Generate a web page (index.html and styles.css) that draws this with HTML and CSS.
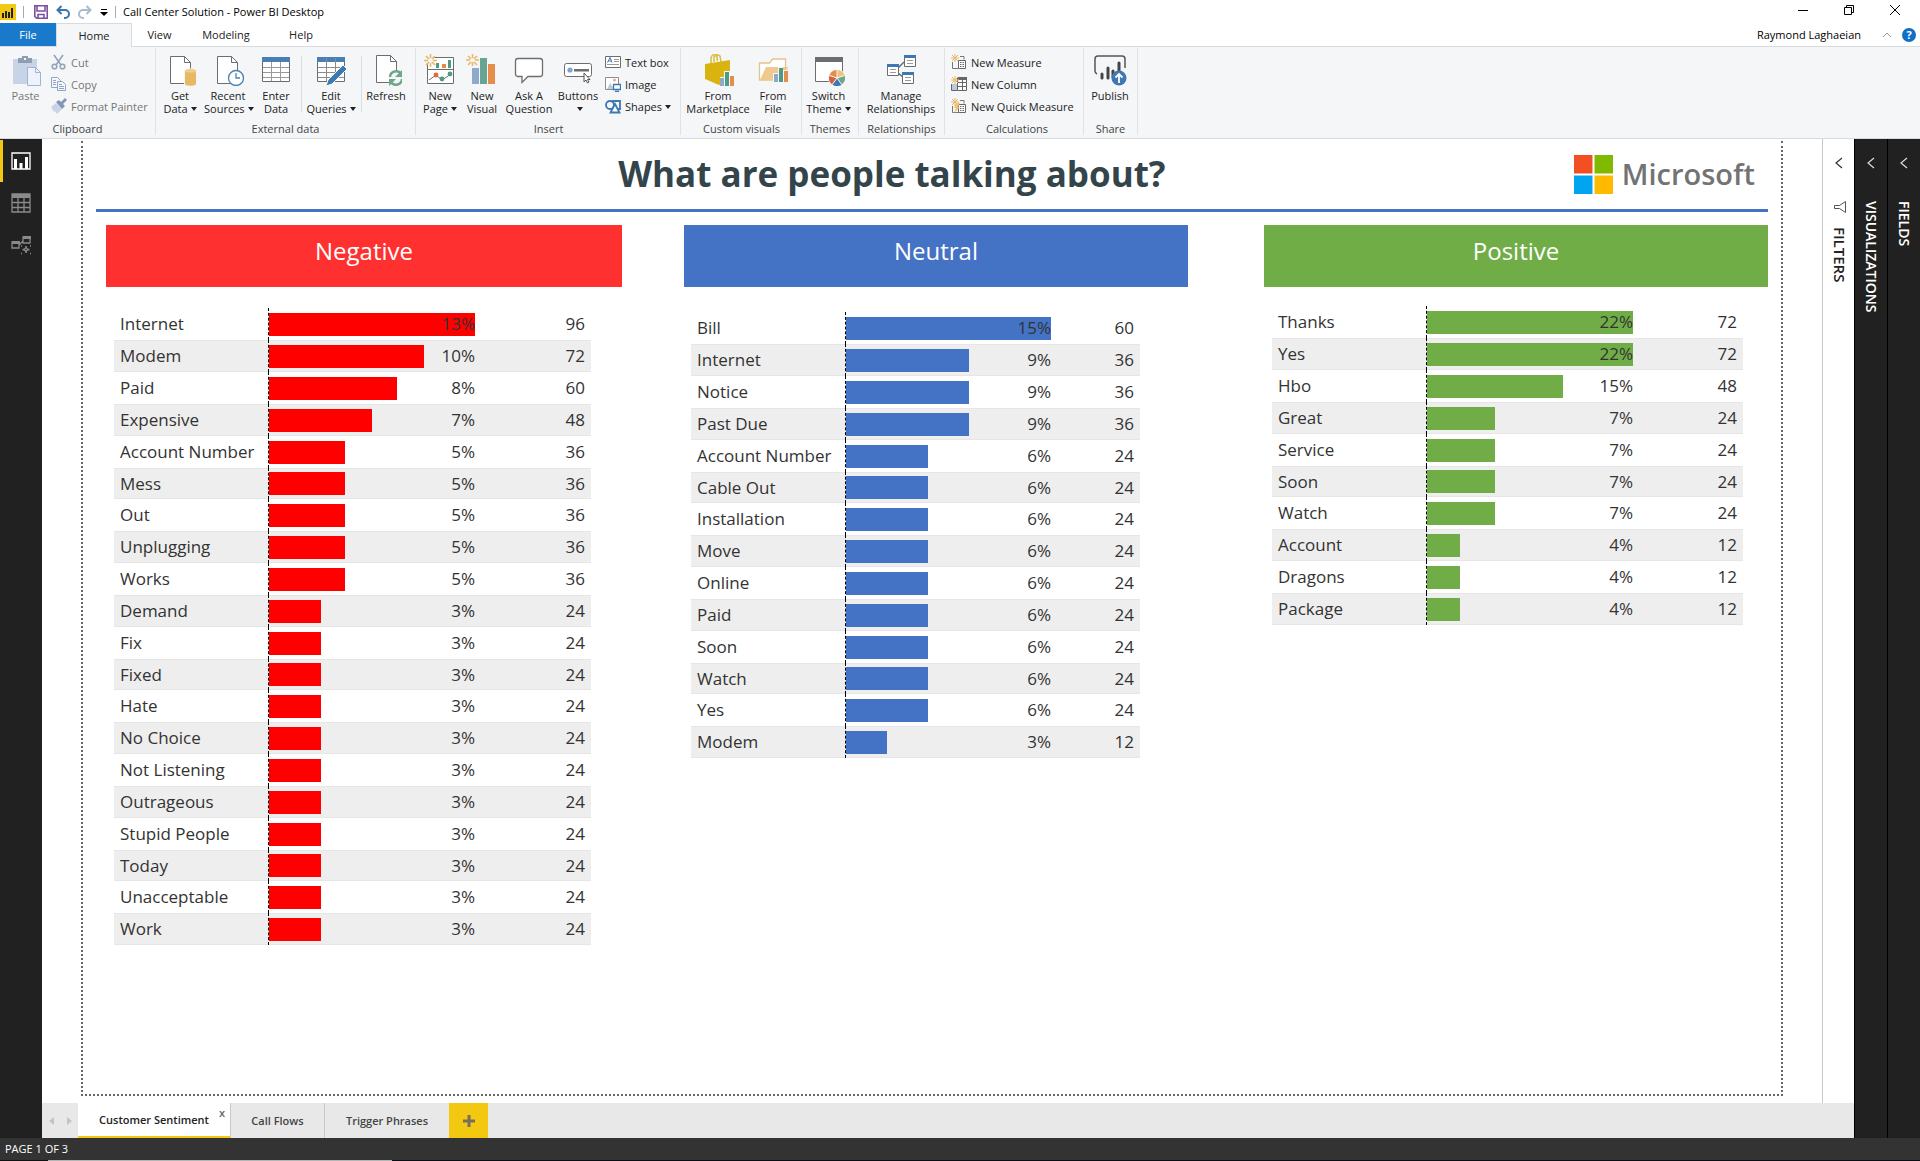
FILE: index.html
```
<!DOCTYPE html>
<html lang="en">
<head>
<meta charset="utf-8">
<title>Call Center Solution - Power BI Desktop</title>
<link rel="stylesheet" href="styles.css">
</head>
<body>
<header class="titlebar">
  <svg class="app-logo" width="16" height="16" viewBox="0 0 16 16"><path fill="#f2c811" d="M0 0h16v16H0z"/><path fill="#222" d="M2 9h2v5H2zM5 7h2v7H5zM8 8h2v6H8zM11 4h2v10h-2z"/></svg>
  <span class="bar-sep"></span>
  <button class="quick" aria-label="Save"><svg width="14" height="14" viewBox="0 0 14 14" fill="none" stroke="#7c4fa3" stroke-width="1.6"><path d="M.8.8h12.4v12.4H2.6L.8 11.4z"/><path d="M3 1v5h8V1M4 13V9.500h6V13"/></svg></button>
  <button class="quick" aria-label="Undo"><svg width="14" height="14" viewBox="0 0 14 14" fill="none" stroke="#3a76ad" stroke-width="2"><path d="M5.500 1 1.500 5l4 4M2 5h7a4 4 0 0 1 0 8H8"/></svg></button>
  <button class="quick" aria-label="Redo"><svg width="14" height="14" viewBox="0 0 14 14" fill="none" stroke="#a9bccf" stroke-width="2"><path d="M8.500 1l4 4-4 4M12 5H5a4 4 0 0 0 0 8h1"/></svg></button>
  <button class="quick quick-more" aria-label="Customize toolbar"><svg width="8" height="8" viewBox="0 0 8 8"><path d="M1 0h6v1H1zM0 3h8L4 7z"/></svg></button>
  <span class="bar-sep"></span>
  <span class="app-title">Call Center Solution - Power BI Desktop</span>
  <div class="window-controls">
    <button aria-label="Minimize"><svg width="12" height="12" viewBox="0 0 12 12"><path d="M1 6h10v1H1z"/></svg></button>
    <button aria-label="Restore"><svg width="12" height="12" viewBox="0 0 12 12" fill="none" stroke="#000"><path d="M1.500 3.500h7v7h-7zM3.500 3V1.500h7v7H9"/></svg></button>
    <button aria-label="Close"><svg width="12" height="12" viewBox="0 0 12 12" stroke="#000"><path d="M1 1l10 10M11 1 1 11"/></svg></button>
  </div>
</header>

<nav class="menu">
  <button class="menu-tab file">File</button>
  <button class="menu-tab home">Home</button>
  <button class="menu-tab view">View</button>
  <button class="menu-tab modeling">Modeling</button>
  <button class="menu-tab help">Help</button>
  <div class="account">
    <span>Raymond Laghaeian</span>
    <button aria-label="Collapse ribbon"><svg width="10" height="6" viewBox="0 0 10 6" fill="none" stroke="#999"><path d="M1 5l4-4 4 4"/></svg></button>
    <button class="help-badge" aria-label="Help">?</button>
  </div>
</nav>

<section class="ribbon">
  <div class="group g-clipboard">
    <div class="tools">
      <button class="big off w-paste"><svg width="32" height="32" viewBox="0 0 32 32"><path fill="#c9d3e6" d="M3 5h24v25H3z"/><path fill="#8e9db3" d="M8 4h4V2h6v2h4v5H8z"/><path fill="#f4f6f8" d="M14 4h2v2h-2z"/><path fill="#eef3fb" stroke="#9db4d6" d="M17.500 13.500h8l5 5v13h-13z"/><path fill="none" stroke="#9db4d6" d="M25.500 13.500v5h5"/></svg>Paste</button>
      <div class="stack">
        <button class="small off"><svg width="16" height="16" viewBox="0 0 16 16" fill="none" stroke="#94a3b8" stroke-width="1.600"><path d="M3 1l7 10M12 1 5 11"/><circle cx="3.500" cy="12.500" r="2.300"/><circle cx="11.500" cy="12.500" r="2.300"/></svg>Cut</button>
        <button class="small off"><svg width="16" height="16" viewBox="0 0 16 16" fill="#f4f6f8" stroke="#8ea7c8"><path d="M.5 1.500h6l3 3v7h-9z"/><path d="M2 4.500h3M2 6.500h3M2 8.500h3"/><path d="M6.500 5.500h5l3 3v6h-8z"/><path d="M8 8.500h3M8 10.500h5M8 12.500h5"/></svg>Copy</button>
        <button class="small off"><svg width="16" height="16" viewBox="0 0 16 16"><path fill="#c9d3e6" d="M0 9l5-4 6 6-5 5-2-3-1 1z"/><path fill="#8296b4" d="M5 4l3-2 2 2 4-4 2 2-4 4 2 2-3 3z"/></svg>Format Painter</button>
      </div>
    </div>
    <div class="group-name">Clipboard</div>
  </div>
  <div class="group g-external">
    <div class="tools">
      <button class="big w48"><svg width="32" height="32" viewBox="0 0 32 32"><path fill="#fff" stroke="#6d6d6d" d="M6.500 2.500h14l6 6v21h-20z"/><path fill="none" stroke="#6d6d6d" d="M20.500 2.500v6h6"/><path fill="#e8b964" stroke="#f4f6f8" d="M20.500 17c0-3 12-3 12 0v13c0 3-12 3-12 0z"/><ellipse cx="26.500" cy="17" rx="5.500" ry="1.600" fill="#f2cd87"/></svg>Get<br><span class="drop">Data</span></button>
      <button class="big w48"><svg width="32" height="32" viewBox="0 0 32 32"><path fill="#fff" stroke="#6d6d6d" d="M5.500 2.500h14l6 6v21h-20z"/><path fill="none" stroke="#6d6d6d" d="M19.500 2.500v6h6"/><circle cx="24" cy="24" r="7.500" fill="#fff" stroke="#4a7fb5" stroke-width="1.300"/><path fill="none" stroke="#4a7fb5" stroke-width="1.300" d="M24 19v5h4"/></svg>Recent<br><span class="drop">Sources</span></button>
      <button class="big w48"><svg width="32" height="32" viewBox="0 0 32 32"><path fill="#fff" stroke="#6d6d6d" d="M2.500 3.500h27v24h-27z"/><path fill="#4a7fb5" d="M2 3h28v5H2z"/><path stroke="#9a9a9a" d="M3 13.500h26M3 18.500h26M3 23.500h26M11.500 8v19M20.500 8v19"/></svg>Enter<br>Data</button>
      <span class="tool-sep"></span>
      <button class="big w-edit"><svg width="32" height="32" viewBox="0 0 32 32"><path fill="#fff" stroke="#6d6d6d" d="M2.500 3.500h27v24h-27z"/><path fill="#4a7fb5" d="M2 3h28v5H2z"/><path stroke="#8a8a8a" d="M3 13.500h26M3 18.500h26M3 23.500h26M11.500 4v23M20.500 4v23"/><path fill="#3e78b2" stroke="#f4f6f8" d="M28 11l4 4-15 15-6 2 2-6z"/></svg>Edit<br><span class="drop">Queries</span></button>
      <span class="tool-sep"></span>
      <button class="big w48"><svg width="32" height="32" viewBox="0 0 32 32"><path fill="#fff" stroke="#6d6d6d" d="M6.500 1.500h14l6 6v21h-20z"/><path fill="none" stroke="#6d6d6d" d="M20.500 1.500v6h6"/><circle cx="26" cy="24" r="7" fill="#f4f6f8"/><g fill="none" stroke="#6fa58a" stroke-width="2.400"><path d="M20 23a6 6 0 0 1 11-3M32 25a6 6 0 0 1-11 3"/></g><path fill="#6fa58a" d="M32 16v7h-7zM19 32v-7h7z"/></svg>Refresh</button>
    </div>
    <div class="group-name">External data</div>
  </div>
  <div class="group g-insert">
    <div class="tools">
      <button class="big w46"><svg width="32" height="32" viewBox="0 0 32 32"><path fill="#fff" stroke="#6d6d6d" d="M3.500 3.500h26v26h-26zM3.500 15.500h26"/><path fill="#4e9a85" d="M12 9h3v5h-3zM24 6h3v8h-3z"/><path fill="#e38a43" d="M18 10h4v4h-4z"/><path fill="none" stroke="#6d6d6d" d="M5 26l7-5 6 5 9-6"/><circle cx="12" cy="21" r="2.400" fill="#e0693a"/><circle cx="18" cy="25" r="2.400" fill="#4e9a85"/><circle cx="26" cy="20" r="2.400" fill="#4e9a85"/><circle cx="6.500" cy="6.500" r="5" fill="#f4f6f8"/><path stroke="#eab765" stroke-width="1.600" d="M6.500 0v4M6.500 9v4M0 6.500h4M9 6.500h4M2 2l3 3M8 8l3 3M11 2 8 5M5 8l-3 3"/></svg>New<br><span class="drop">Page</span></button>
      <button class="big w38"><svg width="32" height="32" viewBox="0 0 32 32"><path fill="#8eaacb" d="M6 14h7v16H6z"/><path fill="#67a592" d="M14 4h7v26h-7z"/><path fill="#e58d4b" d="M22 10h7v20h-7z"/><path stroke="#eab765" stroke-width="1.600" d="M6.500 0v4M6.500 8v4M0 6h4M9 6h4M2 2l3 3M8 8l3 3M11 2 8 5M5 8l-3 3"/></svg>New<br>Visual</button>
      <button class="big w56"><svg width="32" height="32" viewBox="0 0 32 32"><path fill="#fff" stroke="#6d6d6d" stroke-width="1.300" d="M5 4.500h22q2.500 0 2.500 2.500v13q0 2.500-2.500 2.500H15l-6 6v-6H5q-2.500 0-2.500-2.500V7q0-2.500 2.500-2.500z"/></svg>Ask A<br>Question</button>
      <button class="big w-buttons"><svg width="32" height="32" viewBox="0 0 32 32"><rect x="2.500" y="9.500" width="27" height="13" rx="2" fill="#fff" stroke="#6d6d6d"/><circle cx="8" cy="16" r="2.600" fill="#7ba5cf"/><path fill="#6d6d6d" d="M12 15h15v2.500H12z"/><path fill="#fff" stroke="#555" d="M22 19v9l2-2 1.500 3 1.500-1-1.500-2.500h2.500z"/></svg>Buttons<br><span class="drop"></span></button>
      <div class="stack stack-insert">
        <button class="small"><svg width="16" height="16" viewBox="0 0 16 16"><path fill="#fff" stroke="#6d6d6d" d="M.5 2.500h15v11H.5z"/><path fill="none" stroke="#3e78b2" d="M2.500 8.500 5 3.500l2 5M3.500 7h3"/><path stroke="#999" d="M9 5.500h5M9 7.500h5M2 10.500h12"/></svg>Text box</button>
        <button class="small"><svg width="16" height="16" viewBox="0 0 16 16"><path fill="#fff" stroke="#8d8d8d" d="M.5 1.500h13v12H.5z"/><circle cx="9.500" cy="4" r="1.500" fill="#f0a977"/><path fill="#bccbdc" d="M2 13l3-6 4 6z"/><path fill="#fff" stroke="#3e78b2" stroke-width="1.300" d="M8.500 8.500h7v5h-7zM10 15.500h4"/></svg>Image</button>
        <button class="small"><svg width="16" height="16" viewBox="0 0 16 16" fill="none" stroke="#3e78b2" stroke-width="1.800"><circle cx="5" cy="7" r="4"/><path d="M7 3h8v8h-4"/><path fill="#fff" d="M10 6l4.500 8.500h-9z"/></svg><span class="drop">Shapes</span></button>
      </div>
    </div>
    <div class="group-name">Insert</div>
  </div>
  <div class="group g-custom">
    <div class="tools">
      <button class="big w-market"><svg width="32" height="32" viewBox="0 0 32 32"><path fill="none" stroke="#d9bd3c" stroke-width="1.500" d="M9 10V4q1-4 4-3t2 6M12 8V3q2-4 6-1l1 6"/><path fill="#d9b40f" d="M3 10l25-4v20l-11 5-14-6z"/><path fill="#f4f6f8" d="M18 32V23h4v-6h6v4h4v11z"/><path fill="#8eaacb" d="M18 24h4v8h-4z"/><path fill="#4e9a85" d="M23 18h4v14h-4z"/><path fill="#e58d4b" d="M28 22h4v10h-4z"/></svg>From<br>Marketplace</button>
      <button class="big w38"><svg width="32" height="32" viewBox="0 0 32 32"><path fill="#fff" stroke="#e5c48c" stroke-width="1.300" d="M2.500 26V9h10l3-4h13v21z"/><path fill="#efc98d" d="M3 26l6-13h22l-4 13z"/><path fill="#f4f6f8" d="M16 28V19h5v-6h5v3h6v12z"/><path fill="#8eaacb" d="M17 20h4v8h-4z"/><path fill="#4e9a85" d="M22 14h4v14h-4z"/><path fill="#e58d4b" d="M27 17h4v11h-4z"/></svg>From<br>File</button>
    </div>
    <div class="group-name">Custom visuals</div>
  </div>
  <div class="group g-themes">
    <div class="tools">
      <button class="big w-theme"><svg width="32" height="32" viewBox="0 0 32 32"><path fill="#fff" stroke="#6d6d6d" d="M2.500 3.500h27v24h-27z"/><path fill="#6d6d6d" d="M2 3h28v5H2z"/><circle cx="24" cy="24" r="9" fill="#f4f6f8"/><path fill="#e58d4b" d="M24 24V16a8 8 0 0 0-7.600 5.500z"/><path fill="#efc27c" d="M24 24V16a8 8 0 0 1 7.600 5.500z"/><path fill="#6fa58a" d="M24 24l7.600-2.500a8 8 0 0 1-2.900 9z"/><path fill="#3e78b2" d="M24 24l4.700 6.500a8 8 0 0 1-9.400 0z"/><path fill="#d9603c" d="M24 24l-4.700 6.500a8 8 0 0 1-2.900-9z"/><path stroke="#f4f6f8" d="M24 24V16M24 24l7.600-2.500M24 24l4.700 6.500M24 24l-4.700 6.500M24 24l-7.600-2.500"/></svg>Switch<br><span class="drop">Theme</span></button>
    </div>
    <div class="group-name">Themes</div>
  </div>
  <div class="group g-relations">
    <div class="tools">
      <button class="big w-rel"><svg width="32" height="32" viewBox="0 0 32 32"><path fill="none" stroke="#6d6d6d" stroke-width="1.500" d="M12 15l7-7M12 18l7 6"/><g fill="#fff" stroke="#6d6d6d"><path d="M2.500 11.500h11v10h-11zM19.500 1.500h11v11h-11zM17.500 18.500h11v11h-11z"/><path stroke="#9a9a9a" d="M5 15.500h6M5 18.500h6M22 6.500h6M22 9.500h6M20 23.500h6M20 26.500h6"/></g><path fill="#3e78b2" d="M2 10h12v3H2zM19 1h12v3H19zM17 18h12v3H17z"/></svg>Manage<br>Relationships</button>
    </div>
    <div class="group-name">Relationships</div>
  </div>
  <div class="group g-calc">
    <div class="tools">
      <div class="stack">
        <button class="small"><svg width="16" height="16" viewBox="0 0 16 16"><path fill="none" stroke="#777" d="M1.500 8v6.500H7M9 2.500h4v3"/><path stroke="#eab765" d="M4 0v8M0 4h8M1 1l6 6M7 1 1 7"/><path fill="#fff" stroke="#666" d="M7.500 6.500h7v8h-7z"/><path stroke="#666" d="M9 8.500h4M9 10.500h4M9 12.500h4" stroke-dasharray="1 .5"/></svg>New Measure</button>
        <button class="small"><svg width="16" height="16" viewBox="0 0 16 16"><path fill="#fff" stroke="#666" d="M6.500 1.500h9v13h-9zM.5 8v6.500h6M7 6.500h8M7 10.500h8M11.500 2v12"/><path fill="#666" d="M7 1h9v3H7z"/><path fill="#bccbdc" d="M1 8h5v6H1z"/><path stroke="#eab765" d="M4 0v8M0 4h8M1 1l6 6M7 1 1 7"/></svg>New Column</button>
        <button class="small"><svg width="16" height="16" viewBox="0 0 16 16"><path fill="none" stroke="#777" d="M1.500 8v6.500H7M9 2.500h4v3"/><path fill="#fff" stroke="#666" d="M7.500 6.500h7v8h-7z"/><path stroke="#666" d="M9 8.500h4M9 10.500h4M9 12.500h4" stroke-dasharray="1 .5"/><path stroke="#eab765" d="M4 0v8M0 4h8M1 1l6 6M7 1 1 7"/><path fill="#efc27c" d="M5 5h4l-2 4h2l-6 6 2-5H3z"/></svg>New Quick Measure</button>
      </div>
    </div>
    <div class="group-name">Calculations</div>
  </div>
  <div class="group g-share">
    <div class="tools">
      <button class="big w-publish"><svg width="34" height="32" viewBox="0 0 34 32"><path fill="none" stroke="#555" stroke-width="1.500" d="M4 20q-2-1-2-3V5q0-3 3-3h24q3 0 3 3v9"/><path stroke="#444" stroke-width="3" stroke-linecap="round" d="M9 20v4M15 14v10M20 17v6M26 9v8"/><circle cx="26" cy="24" r="7.500" fill="#3e78b2"/><path fill="none" stroke="#fff" stroke-width="1.800" d="M26 29v-9M22.500 23.500 26 20l3.500 3.500"/></svg>Publish</button>
    </div>
    <div class="group-name">Share</div>
  </div>
</section>

<div class="workspace">
  <nav class="views">
    <button class="view-btn active" aria-label="Report"><svg width="20" height="18" viewBox="0 0 20 18" fill="none" stroke="#fff"><path d="M1 1h18v16H1z" stroke-width="1.300"/><path fill="#fff" stroke="none" d="M3 7h3v10H3zM8.500 11h3v6h-3zM14 5h3v12h-3z"/></svg></button>
    <button class="view-btn" aria-label="Data"><svg width="20" height="20" viewBox="0 0 20 20" fill="none" stroke="#8a8a8a" stroke-width="1.300"><path d="M1 1h18v18H1zM1 9.500h18M1 14.500h18M7 5v14M13 5v14"/><path fill="#8a8a8a" stroke="none" d="M1 1h18v4H1z"/></svg></button>
    <button class="view-btn" aria-label="Model"><svg width="20" height="20" viewBox="0 0 20 20" fill="none" stroke="#8a8a8a" stroke-width="1.300"><path d="M1 7h7v6H1zM12 2h7v6h-7zM8 10l4-4"/><path fill="#8a8a8a" stroke="none" d="M1 6h8v3H1zM12 1h8v3h-8z"/><path d="M15 11q0 3.500 3.500 3.500Q15 14.500 15 18q0-3.500-3.500-3.500Q15 14.500 15 11z"/><path stroke-width="1.500" d="M10 11h1M19 11h1M10 18.500h1M19 18.500h1"/></svg></button>
  </nav>

  <main class="center">
    <div class="stage">
      <article class="page">
        <div class="page-head">
          <h1>What are people talking about?</h1>
          <div class="brand">
            <svg width="39" height="39" viewBox="0 0 39 39"><path fill="#f25022" d="M0 0h18.500v18.500H0z"/><path fill="#7fba00" d="M20.500 0H39v18.500H20.500z"/><path fill="#00a4ef" d="M0 20.500h18.500V39H0z"/><path fill="#ffb900" d="M20.500 20.500H39V39H20.500z"/></svg>
            <span>Microsoft</span>
          </div>
        </div>
        <div class="columns">
          <section class="sentiment negative">
            <h2>Negative</h2>
            <table aria-label="Negative phrases">
              <tr><th scope="row">Internet</th><td class="share"><div class="track"><i class="bar" style="width:100%"></i><span>13%</span></div></td><td class="count">96</td></tr>
              <tr><th scope="row">Modem</th><td class="share"><div class="track"><i class="bar" style="width:75%"></i><span>10%</span></div></td><td class="count">72</td></tr>
              <tr><th scope="row">Paid</th><td class="share"><div class="track"><i class="bar" style="width:62%"></i><span>8%</span></div></td><td class="count">60</td></tr>
              <tr><th scope="row">Expensive</th><td class="share"><div class="track"><i class="bar" style="width:50%"></i><span>7%</span></div></td><td class="count">48</td></tr>
              <tr><th scope="row">Account Number</th><td class="share"><div class="track"><i class="bar" style="width:37%"></i><span>5%</span></div></td><td class="count">36</td></tr>
              <tr><th scope="row">Mess</th><td class="share"><div class="track"><i class="bar" style="width:37%"></i><span>5%</span></div></td><td class="count">36</td></tr>
              <tr><th scope="row">Out</th><td class="share"><div class="track"><i class="bar" style="width:37%"></i><span>5%</span></div></td><td class="count">36</td></tr>
              <tr><th scope="row">Unplugging</th><td class="share"><div class="track"><i class="bar" style="width:37%"></i><span>5%</span></div></td><td class="count">36</td></tr>
              <tr><th scope="row">Works</th><td class="share"><div class="track"><i class="bar" style="width:37%"></i><span>5%</span></div></td><td class="count">36</td></tr>
              <tr><th scope="row">Demand</th><td class="share"><div class="track"><i class="bar" style="width:25%"></i><span>3%</span></div></td><td class="count">24</td></tr>
              <tr><th scope="row">Fix</th><td class="share"><div class="track"><i class="bar" style="width:25%"></i><span>3%</span></div></td><td class="count">24</td></tr>
              <tr><th scope="row">Fixed</th><td class="share"><div class="track"><i class="bar" style="width:25%"></i><span>3%</span></div></td><td class="count">24</td></tr>
              <tr><th scope="row">Hate</th><td class="share"><div class="track"><i class="bar" style="width:25%"></i><span>3%</span></div></td><td class="count">24</td></tr>
              <tr><th scope="row">No Choice</th><td class="share"><div class="track"><i class="bar" style="width:25%"></i><span>3%</span></div></td><td class="count">24</td></tr>
              <tr><th scope="row">Not Listening</th><td class="share"><div class="track"><i class="bar" style="width:25%"></i><span>3%</span></div></td><td class="count">24</td></tr>
              <tr><th scope="row">Outrageous</th><td class="share"><div class="track"><i class="bar" style="width:25%"></i><span>3%</span></div></td><td class="count">24</td></tr>
              <tr><th scope="row">Stupid People</th><td class="share"><div class="track"><i class="bar" style="width:25%"></i><span>3%</span></div></td><td class="count">24</td></tr>
              <tr><th scope="row">Today</th><td class="share"><div class="track"><i class="bar" style="width:25%"></i><span>3%</span></div></td><td class="count">24</td></tr>
              <tr><th scope="row">Unacceptable</th><td class="share"><div class="track"><i class="bar" style="width:25%"></i><span>3%</span></div></td><td class="count">24</td></tr>
              <tr><th scope="row">Work</th><td class="share"><div class="track"><i class="bar" style="width:25%"></i><span>3%</span></div></td><td class="count">24</td></tr>
            </table>
          </section>
          <section class="sentiment neutral">
            <h2>Neutral</h2>
            <table aria-label="Neutral phrases">
              <tr><th scope="row">Bill</th><td class="share"><div class="track"><i class="bar" style="width:100%"></i><span>15%</span></div></td><td class="count">60</td></tr>
              <tr><th scope="row">Internet</th><td class="share"><div class="track"><i class="bar" style="width:60%"></i><span>9%</span></div></td><td class="count">36</td></tr>
              <tr><th scope="row">Notice</th><td class="share"><div class="track"><i class="bar" style="width:60%"></i><span>9%</span></div></td><td class="count">36</td></tr>
              <tr><th scope="row">Past Due</th><td class="share"><div class="track"><i class="bar" style="width:60%"></i><span>9%</span></div></td><td class="count">36</td></tr>
              <tr><th scope="row">Account Number</th><td class="share"><div class="track"><i class="bar" style="width:40%"></i><span>6%</span></div></td><td class="count">24</td></tr>
              <tr><th scope="row">Cable Out</th><td class="share"><div class="track"><i class="bar" style="width:40%"></i><span>6%</span></div></td><td class="count">24</td></tr>
              <tr><th scope="row">Installation</th><td class="share"><div class="track"><i class="bar" style="width:40%"></i><span>6%</span></div></td><td class="count">24</td></tr>
              <tr><th scope="row">Move</th><td class="share"><div class="track"><i class="bar" style="width:40%"></i><span>6%</span></div></td><td class="count">24</td></tr>
              <tr><th scope="row">Online</th><td class="share"><div class="track"><i class="bar" style="width:40%"></i><span>6%</span></div></td><td class="count">24</td></tr>
              <tr><th scope="row">Paid</th><td class="share"><div class="track"><i class="bar" style="width:40%"></i><span>6%</span></div></td><td class="count">24</td></tr>
              <tr><th scope="row">Soon</th><td class="share"><div class="track"><i class="bar" style="width:40%"></i><span>6%</span></div></td><td class="count">24</td></tr>
              <tr><th scope="row">Watch</th><td class="share"><div class="track"><i class="bar" style="width:40%"></i><span>6%</span></div></td><td class="count">24</td></tr>
              <tr><th scope="row">Yes</th><td class="share"><div class="track"><i class="bar" style="width:40%"></i><span>6%</span></div></td><td class="count">24</td></tr>
              <tr><th scope="row">Modem</th><td class="share"><div class="track"><i class="bar" style="width:20%"></i><span>3%</span></div></td><td class="count">12</td></tr>
            </table>
          </section>
          <section class="sentiment positive">
            <h2>Positive</h2>
            <table aria-label="Positive phrases">
              <tr><th scope="row">Thanks</th><td class="share"><div class="track"><i class="bar" style="width:100%"></i><span>22%</span></div></td><td class="count">72</td></tr>
              <tr><th scope="row">Yes</th><td class="share"><div class="track"><i class="bar" style="width:100%"></i><span>22%</span></div></td><td class="count">72</td></tr>
              <tr><th scope="row">Hbo</th><td class="share"><div class="track"><i class="bar" style="width:66%"></i><span>15%</span></div></td><td class="count">48</td></tr>
              <tr><th scope="row">Great</th><td class="share"><div class="track"><i class="bar" style="width:33%"></i><span>7%</span></div></td><td class="count">24</td></tr>
              <tr><th scope="row">Service</th><td class="share"><div class="track"><i class="bar" style="width:33%"></i><span>7%</span></div></td><td class="count">24</td></tr>
              <tr><th scope="row">Soon</th><td class="share"><div class="track"><i class="bar" style="width:33%"></i><span>7%</span></div></td><td class="count">24</td></tr>
              <tr><th scope="row">Watch</th><td class="share"><div class="track"><i class="bar" style="width:33%"></i><span>7%</span></div></td><td class="count">24</td></tr>
              <tr><th scope="row">Account</th><td class="share"><div class="track"><i class="bar" style="width:16%"></i><span>4%</span></div></td><td class="count">12</td></tr>
              <tr><th scope="row">Dragons</th><td class="share"><div class="track"><i class="bar" style="width:16%"></i><span>4%</span></div></td><td class="count">12</td></tr>
              <tr><th scope="row">Package</th><td class="share"><div class="track"><i class="bar" style="width:16%"></i><span>4%</span></div></td><td class="count">12</td></tr>
            </table>
          </section>
        </div>
      </article>
      <aside class="pane filters">
        <button aria-label="Expand filters"><svg width="8" height="12" viewBox="0 0 8 12" fill="none" stroke="#333" stroke-width="1.200"><path d="M7 1 1 6l6 5"/></svg></button>
        <div class="pane-name">
          <svg width="12" height="12" viewBox="0 0 12 12" fill="none" stroke="#555"><path d="M11.500.5v11L5.500 7.500h-5v-3h5z"/></svg>
          <span>FILTERS</span>
        </div>
      </aside>
    </div>
    <div class="page-tabs">
      <button class="arrow" aria-label="Previous page"><svg width="5" height="8" viewBox="0 0 5 8"><path fill="#c4c4c4" d="M5 0v8L0 4z"/></svg></button>
      <button class="arrow" aria-label="Next page"><svg width="5" height="8" viewBox="0 0 5 8"><path fill="#c4c4c4" d="M0 0v8l5-4z"/></svg></button>
      <div class="page-tab current"><button class="tab-label">Customer Sentiment</button><button class="tab-close" aria-label="Delete page">x</button></div>
      <div class="page-tab flows"><button class="tab-label">Call Flows</button></div>
      <div class="page-tab phrases"><button class="tab-label">Trigger Phrases</button></div>
      <button class="add-page" aria-label="New page"><svg width="12" height="12" viewBox="0 0 12 12"><path fill="#7a6f5c" d="M4.500 0h3v4.500H12v3H7.500V12h-3V7.500H0v-3h4.500z"/></svg></button>
    </div>
  </main>

  <aside class="pane dark">
    <button aria-label="Expand visualizations"><svg width="8" height="12" viewBox="0 0 8 12" fill="none" stroke="#ddd" stroke-width="1.200"><path d="M7 1 1 6l6 5"/></svg></button>
    <div class="pane-name"><span>VISUALIZATIONS</span></div>
  </aside>
  <aside class="pane dark">
    <button aria-label="Expand fields"><svg width="8" height="12" viewBox="0 0 8 12" fill="none" stroke="#ddd" stroke-width="1.200"><path d="M7 1 1 6l6 5"/></svg></button>
    <div class="pane-name"><span>FIELDS</span></div>
  </aside>
</div>

<footer class="status">PAGE 1 OF 3</footer>
<div class="taskbar-edge"></div>
</body>
</html>
```
FILE: styles.css
```
* { box-sizing: border-box; }
body {
  margin: 0;
  min-height: 100vh;
  display: flex;
  flex-direction: column;
  background: #fff;
  color: #222;
  font: 11px/13px "Open Sans", "Noto Sans", sans-serif;
}
button {
  margin: 0;
  padding: 0;
  border: 0;
  background: none;
  color: inherit;
  font: inherit;
}
svg { display: block; flex: none; }

/* title bar */
.titlebar { display: flex; align-items: center; height: 23px; }
.app-logo { margin-right: 7px; }
.bar-sep { width: 1px; height: 12px; background: #aaa; }
.quick { margin-left: 8px; }
.bar-sep + .quick { margin-left: 10px; }
.quick-more { margin: 2px 7px 0 8px; }
.app-title { margin-left: 7px; color: #000; }
.window-controls { display: flex; margin: 0 2px 3px auto; }
.window-controls button { display: grid; place-items: center; width: 46px; height: 20px; }

/* menu row */
.menu { display: flex; height: 24px; border-bottom: 1px solid #d5dbe0; }
.menu-tab { height: 23px; }
.file { width: 56px; background: #1979ca; color: #fff; }
.home { width: 76px; height: 24px; background: #f4f6f8; border: 1px solid #d5dbe0; border-bottom: 0; }
.view { width: 55px; }
.modeling { width: 78px; }
.help { width: 72px; }
.account { display: flex; align-items: center; margin-left: auto; padding-right: 4px; color: #000; }
.account button { margin-left: 21px; }
.account .help-badge { width: 14px; height: 14px; margin-left: 10px; border-radius: 50%; background: #0f6fc6; color: #fff; font-weight: 700; }

/* ribbon */
.ribbon { display: flex; height: 92px; background: #f4f6f8; border-bottom: 1px solid #d5dbe0; }
.group {
  display: flex;
  flex-direction: column;
  flex: none;
  justify-content: space-between;
  margin: 1px 0 3px;
  padding: 6px 0 0;
  border-right: 1px solid #dfe3e7;
}
.tools { display: flex; align-items: flex-start; height: 64px; }
.group-name { color: #444; text-align: center; }
.big { flex: none; text-align: center; white-space: nowrap; }
.big svg { margin: 0 auto 3px; }
.off { color: #777; }
.drop::after {
  content: "";
  display: inline-block;
  margin-left: 3px;
  border: 3px solid transparent;
  border-top: 4px solid #222;
  border-bottom: 0;
  vertical-align: 2px;
}
.stack { display: flex; flex-direction: column; }
.stack-insert { margin-left: 6px; }
.small { display: flex; align-items: center; gap: 4px; height: 22px; white-space: nowrap; }
.stack .small:first-child { height: 16px; margin-bottom: 3px; }
.tool-sep { width: 1px; height: 56px; margin: 2px 0 0 1px; background: #d9dde1; }
.g-clipboard { width: 156px; }
.g-external { width: 260px; }
.g-insert { width: 265px; padding-left: 1px; }
.g-custom { width: 121px; padding-left: 1px; }
.g-themes { width: 57px; }
.g-relations { width: 86px; }
.g-calc { width: 139px; padding-left: 6px; }
.g-share { width: 54px; }
.w-paste { width: 51px; }
.w38 { width: 38px; }
.w46 { width: 46px; }
.w48 { width: 48px; }
.w56 { width: 56px; }
.w-edit { width: 58px; }
.w-buttons { width: 42px; }
.w-market { width: 72px; }
.w-theme { width: 53px; }
.w-rel { width: 84px; }
.w-publish { width: 52px; }

/* workspace */
.workspace { display: flex; flex: 1; }
.views { display: flex; flex-direction: column; width: 42px; padding-top: 1px; background: #212121; }
.view-btn { display: grid; place-items: center; height: 42px; border-left: 3px solid transparent; padding-right: 4px; }
.view-btn.active { border-left-color: #f2c811; }
.center { display: flex; flex: 1; flex-direction: column; min-width: 0; }
.stage { display: flex; flex: 1; }

/* report page */
.page {
  flex: 1;
  min-width: 0;
  margin: 2px 39px 7px;
  padding: 0 13px;
  border: 2px dotted #666;
  border-top: 0;
}
.page-head {
  display: flex;
  align-items: center;
  justify-content: space-between;
  height: 71px;
  padding: 0 13px 2px 114px;
  border-bottom: 3px solid #4472c4;
}
.page-head h1 {
  flex: 1;
  margin: 0;
  color: #33454a;
  font-size: 35px;
  line-height: 48px;
  text-align: center;
}
.brand { display: flex; align-items: center; gap: 9px; color: #737373; font-size: 29px; font-weight: 600; line-height: 38px; }
.columns {
  display: grid;
  grid-template-columns: 516fr 62fr 504fr 76fr 504fr;
  margin: 13px 0 0 10px;
}
.neutral { grid-column: 3; }
.positive { grid-column: 5; }
.sentiment h2 {
  margin: 0;
  padding: 7px 0 17px;
  background: var(--head);
  color: #fff;
  font-size: 24px;
  font-weight: 400;
  line-height: 38px;
  text-align: center;
}
.negative { --head: #ff3030; --bar: #fe0000; --count: 116px; }
.neutral { --head: #4472c4; --bar: #4472c4; --count: 89px; }
.positive { --head: #70ad47; --bar: #70ad47; --count: 110px; }
.sentiment table { display: flex; flex-direction: column; color: #333; font-size: 17px; line-height: 24px; }
.sentiment tbody { display: block; }
.negative table { margin: 21px 31px 0 8px; }
.neutral table { margin: 25px 48px 0 7px; }
.positive table { margin: 19px 25px 0 8px; }
.sentiment tr { display: grid; grid-template-columns: 154px 1fr var(--count); align-items: stretch; height: 32px; }
.sentiment tr:nth-child(6n) { height: 31px; }
.sentiment tr:nth-child(even) { background: #eee; box-shadow: inset 0 1px #e6e6e6, inset 0 -1px #e6e6e6; }
.sentiment th { padding: 4px 0 0 6px; font-weight: 400; text-align: left; white-space: nowrap; }
.share { padding: 0; border-left: 1px dashed #000; }
.track { display: grid; align-items: center; height: 100%; }
.track > * { grid-area: 1 / 1; }
.bar { height: 23px; background: var(--bar); }
.track span { text-align: right; }
.count { padding: 4px 6px 0 0; text-align: right; }

/* side panes */
.pane { display: flex; flex: none; flex-direction: column; align-items: center; width: 33px; padding-top: 18px; }
.pane button { height: 12px; }
.pane-name { display: flex; flex-direction: column; align-items: center; gap: 14px; margin-top: 32px; }
.pane-name span { writing-mode: vertical-rl; font-size: 14px; font-weight: 600; line-height: 20px; }
.filters { width: 32px; border-left: 1px solid #c8c8c8; }
.filters .pane-name { padding-left: 3px; }
.filters span { font-size: 15px; }
.dark { background: #212121; border-left: 1px solid #000; color: #fff; }

/* page tabs */
.page-tabs { display: flex; height: 35px; background: #e8e8e8; color: #444; font-weight: 600; }
.arrow { display: grid; place-items: center; width: 18px; }
.page-tab { position: relative; display: grid; border-right: 1px solid #c8c8c8; }
.current { width: 153px; background: #fff; border-bottom: 2px solid #f2c811; color: #222; }
.flows { width: 94px; }
.phrases { width: 124px; border-right: 0; }
.tab-close { position: absolute; top: 3px; right: 5px; color: #666; }
.add-page { display: grid; place-items: center; width: 39px; background: #f2c811; }

.status { height: 22px; padding: 4px 5px; background: #333; color: #fff; }
.taskbar-edge { height: 1px; background: linear-gradient(90deg, #111 48px, #b5b5b5 48px, #b5b5b5 392px, #0b0d14 392px); }
```
